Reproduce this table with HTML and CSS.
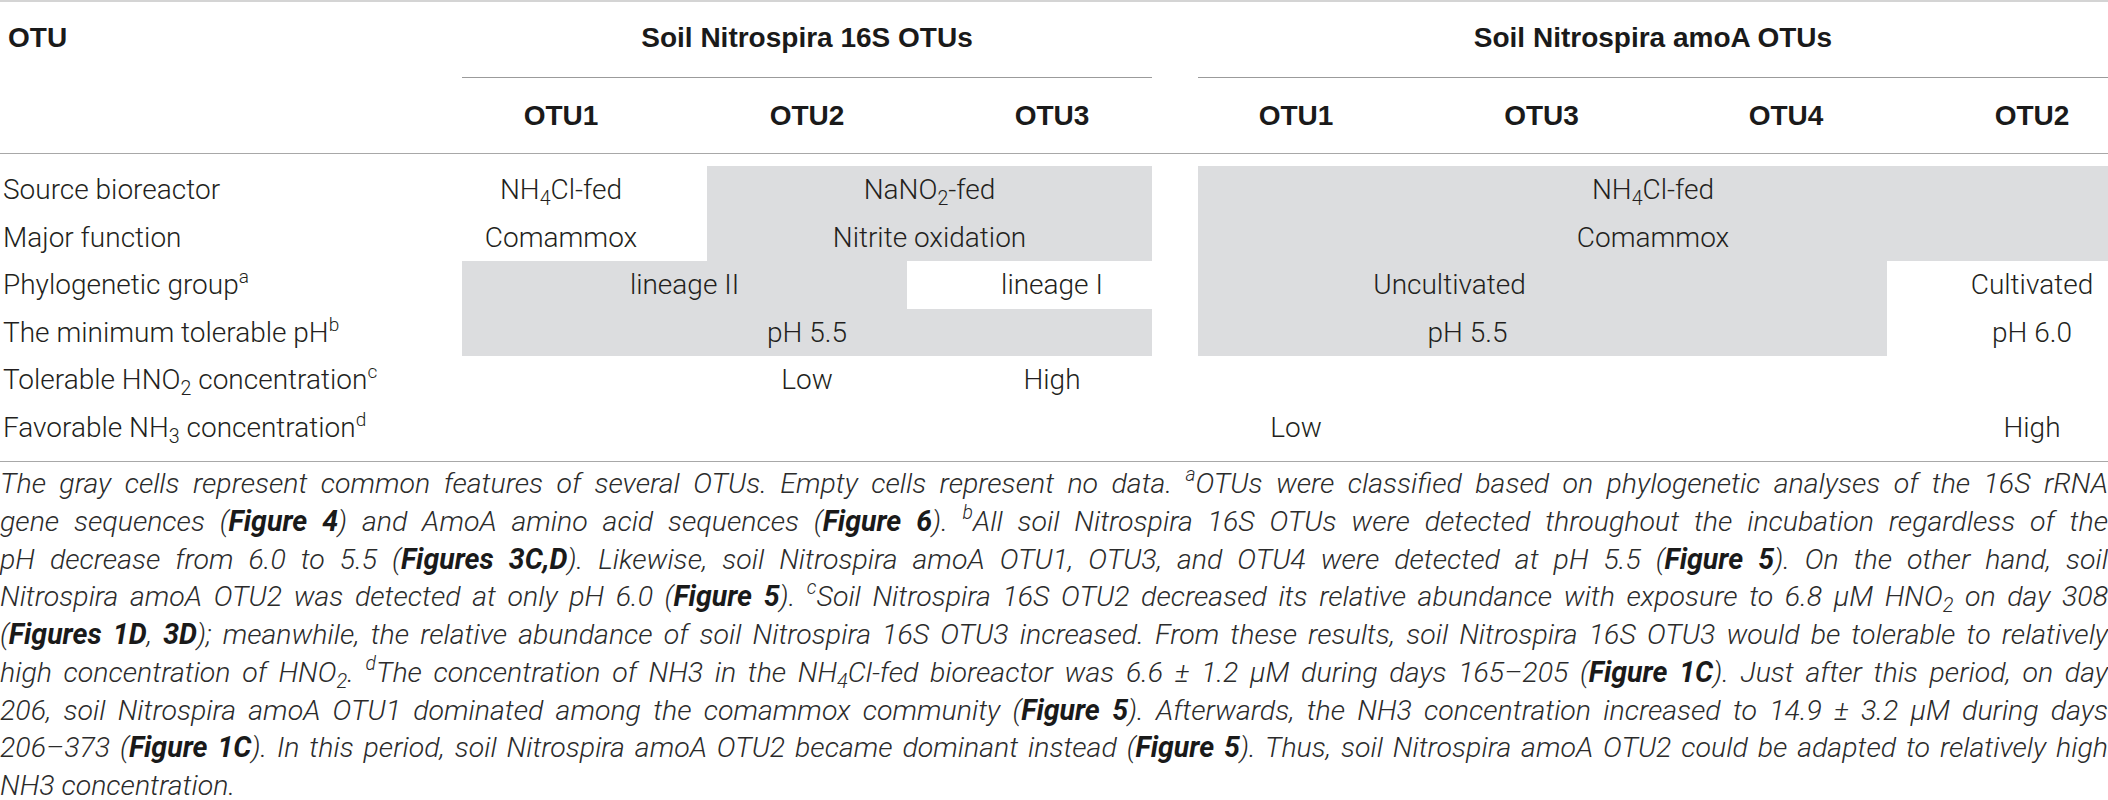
FILE: index.html
```html
<!DOCTYPE html>
<html lang="en">
  <head>
    <meta charset="UTF-8" />
    <meta name="viewport" content="width=device-width, initial-scale=1.0" />
    <title>Soil Nitrospira OTUs</title>
    <link rel="stylesheet" href="styles.css">
  </head>
  <body>
    <div class="sheet">
      <!-- group headings -->
      <div class="row groups">
        <div class="cell label head">OTU</div>
        <div class="cell group head span3">Soil Nitrospira 16S OTUs</div>
        <div class="cell"></div>
        <div class="cell group head span4">Soil Nitrospira amoA OTUs</div>
      </div>
      <!-- column headings -->
      <div class="row cols">
        <div class="cell"></div>
        <div class="cell head c1">OTU1</div>
        <div class="cell head">OTU2</div>
        <div class="cell head c3">OTU3</div>
        <div class="cell"></div>
        <div class="cell head a1">OTU1</div>
        <div class="cell head">OTU3</div>
        <div class="cell head a3">OTU4</div>
        <div class="cell head a4">OTU2</div>
      </div>

      <div class="body">
        <div class="row line">
          <div class="cell label">Source bioreactor</div>
          <div class="cell c1">NH<span class="sub">4</span>Cl-fed</div>
          <div class="cell fill span2">NaNO<span class="sub">2</span>-fed</div>
          <div class="cell"></div>
          <div class="cell fill span4">NH<span class="sub">4</span>Cl-fed</div>
        </div>
        <div class="row line">
          <div class="cell label">Major function</div>
          <div class="cell c1">Comammox</div>
          <div class="cell fill span2">Nitrite oxidation</div>
          <div class="cell"></div>
          <div class="cell fill span4">Comammox</div>
        </div>
        <div class="row line">
          <div class="cell label">Phylogenetic group<span class="sup">a</span></div>
          <div class="cell fill span2">lineage II</div>
          <div class="cell c3">lineage I</div>
          <div class="cell"></div>
          <div class="cell fill span3 uncult">Uncultivated</div>
          <div class="cell a4">Cultivated</div>
        </div>
        <div class="row line">
          <div class="cell label">The minimum tolerable pH<span class="sup">b</span></div>
          <div class="cell fill span3">pH 5.5</div>
          <div class="cell"></div>
          <div class="cell fill span3 low-ph">pH 5.5</div>
          <div class="cell a4">pH 6.0</div>
        </div>
        <div class="row line">
          <div class="cell label">Tolerable HNO<span class="sub">2</span> concentration<span class="sup">c</span></div>
          <div class="cell c1"></div>
          <div class="cell">Low</div>
          <div class="cell c3">High</div>
          <div class="cell"></div>
          <div class="cell a1"></div>
          <div class="cell"></div>
          <div class="cell a3"></div>
          <div class="cell a4"></div>
        </div>
        <div class="row line">
          <div class="cell label">Favorable NH<span class="sub">3</span> concentration<span class="sup">d</span></div>
          <div class="cell c1"></div>
          <div class="cell"></div>
          <div class="cell c3"></div>
          <div class="cell"></div>
          <div class="cell a1">Low</div>
          <div class="cell"></div>
          <div class="cell a3"></div>
          <div class="cell a4">High</div>
        </div>
      </div>

      <p class="note">
        <span class="ln">The gray cells represent common features of several OTUs. Empty cells represent no data. <span class="sup">a</span>OTUs were classified based on phylogenetic analyses of the 16S rRNA</span>
        <span class="ln">gene sequences (<b>Figure 4</b>) and AmoA amino acid sequences (<b>Figure 6</b>). <span class="sup">b</span>All soil Nitrospira 16S OTUs were detected throughout the incubation regardless of the</span>
        <span class="ln">pH decrease from 6.0 to 5.5 (<b>Figures 3C,D</b>). Likewise, soil Nitrospira amoA OTU1, OTU3, and OTU4 were detected at pH 5.5 (<b>Figure 5</b>). On the other hand, soil</span>
        <span class="ln">Nitrospira amoA OTU2 was detected at only pH 6.0 (<b>Figure 5</b>). <span class="sup">c</span>Soil Nitrospira 16S OTU2 decreased its relative abundance with exposure to 6.8 &micro;M HNO<span class="sub">2</span> on day 308</span>
        <span class="ln">(<b>Figures 1D</b>, <b>3D</b>); meanwhile, the relative abundance of soil Nitrospira 16S OTU3 increased. From these results, soil Nitrospira 16S OTU3 would be tolerable to relatively</span>
        <span class="ln">high concentration of HNO<span class="sub">2</span>. <span class="sup">d</span>The concentration of NH3 in the NH<span class="sub">4</span>Cl-fed bioreactor was 6.6 &plusmn; 1.2 &micro;M during days 165&ndash;205 (<b>Figure 1C</b>). Just after this period, on day</span>
        <span class="ln">206, soil Nitrospira amoA OTU1 dominated among the comammox community (<b>Figure 5</b>). Afterwards, the NH3 concentration increased to 14.9 &plusmn; 3.2 &micro;M during days</span>
        <span class="ln">206&ndash;373 (<b>Figure 1C</b>). In this period, soil Nitrospira amoA OTU2 became dominant instead (<b>Figure 5</b>). Thus, soil Nitrospira amoA OTU2 could be adapted to relatively high</span>
        <span class="ln end">NH3 concentration.</span>
      </p>
    </div>
  </body>
</html>
```

FILE: styles.css
```css
body {
  margin: 0;
  background-color: #fff;
  color: #231f20;
  font-family: Roboto, "Liberation Sans", Arial, sans-serif;
  font-weight: 300;
  font-size: 28px;
}
.sheet {
  width: 2108px;
  border-top: 2px solid #d4d4d4;
}
.row {
  display: grid;
  grid-template-columns: 462px 245px 200px 245px 46px 221px 245px 223px 221px;
}
.cell {
  text-align: center;
  white-space: nowrap;
}
.label {
  text-align: left;
  padding-left: 3px;
}
.head {
  font-family: "Liberation Sans", Arial, sans-serif;
  font-weight: bold;
  color: #1a1a1a;
}
.groups .label {
  padding-left: 8px;
}
.groups {
  height: 76px;
}
.groups .cell {
  line-height: 72px;
}
.group {
  border-bottom: 1px solid #9b9b9b;
}
.cols {
  height: 75px;
  border-bottom: 1px solid #a8a8a8;
}
.cols .cell {
  line-height: 75px;
}
.body {
  padding: 12px 0 10px;
  border-bottom: 1px solid #a8a8a8;
}
.line {
  height: 47.5px;
}
.line .cell {
  line-height: 47.5px;
}
.span2 { grid-column: span 2; }
.span3 { grid-column: span 3; }
.span4 { grid-column: span 4; }
.fill {
  background-color: #dcdddf;
}

/* nudges so the text sits where the printed columns put it */
.c1 { padding-right: 47px; }
.c3 { padding-left: 45px; }
.a1 { padding-right: 25px; }
.a3 { padding-left: 21px; }
.a4 { padding-left: 69px; }
.uncult { padding-right: 186px; }
.low-ph { padding-right: 150px; }

.sub {
  font-size: 0.7em;
  line-height: 0;
  vertical-align: -0.3em;
}
.sup {
  font-size: 0.68em;
  line-height: 0;
  vertical-align: 0.6em;
}

.note {
  margin: 3px 0 0;
  font-family: Roboto, "Liberation Sans", sans-serif;
  font-style: italic;
  font-weight: 300;
  font-size: 28.5px;
  line-height: 37.75px;
  color: #2b2b2b;
}
.note b {
  font-weight: bold;
  color: #1a1a1a;
}
.ln {
  display: block;
  text-align: justify;
  text-align-last: justify;
}
.ln.end {
  text-align-last: left;
}
```
